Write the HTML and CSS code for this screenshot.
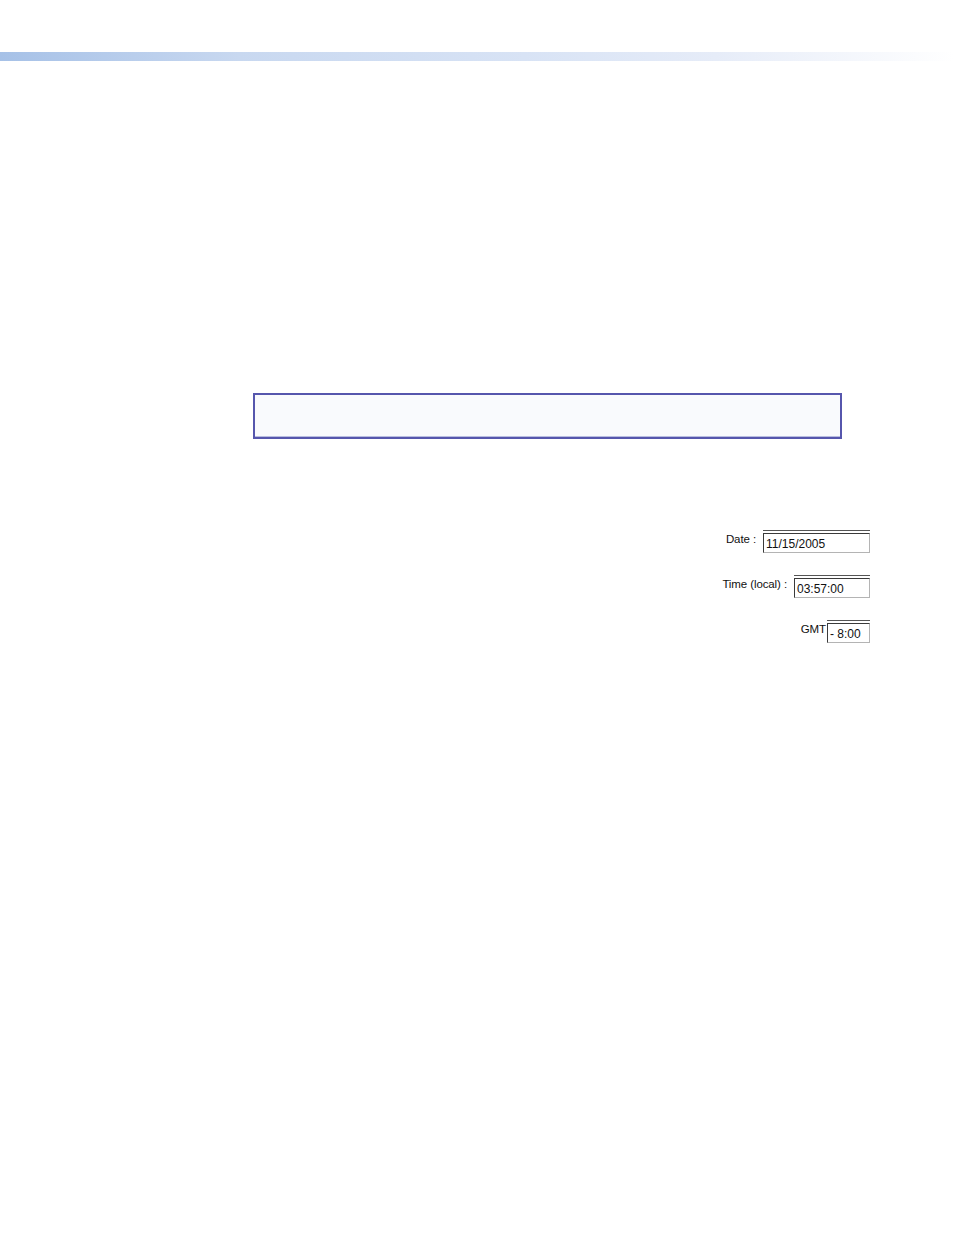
FILE: index.html
```html
<!DOCTYPE html>
<html>
<head>
<meta charset="utf-8">
<link rel="stylesheet" href="styles.css">
</head>
<body>
<div class="topbar"></div>
<div class="note"></div>
<div class="fields">
  <div class="row row-date">
    <span class="label">Date :</span>
    <div class="field w-date"><div class="field-inner">11/15/2005</div></div>
  </div>
  <div class="row row-time">
    <span class="label">Time (local) :</span>
    <div class="field w-time"><div class="field-inner">03:57:00</div></div>
  </div>
  <div class="row row-gmt">
    <span class="label">GMT</span>
    <div class="field w-gmt"><div class="field-inner">- 8:00</div></div>
  </div>
</div>
</body>
</html>
```
FILE: styles.css
```css
html, body {
  margin: 0;
  padding: 0;
  background: #ffffff;
  font-family: "Liberation Sans", Arial, sans-serif;
}
.topbar {
  margin-top: 52px;
  height: 9px;
  background: linear-gradient(to right, #a6c1e7 0%, #c8d8f0 25%, #d8e3f5 55%, #e6ecf8 75%, #ffffff 100%);
}
.note {
  box-sizing: border-box;
  margin: 332px 0 0 253px;
  width: 589px;
  height: 46px;
  border: 2px solid #5656ad;
  background: #f9fafd;
  box-shadow: inset 0 -2px 0 -1px #b9bde0;
}
.fields {
  margin-top: 91px;
  padding-right: 84px;
  display: flex;
  flex-direction: column;
  align-items: flex-end;
}
.row {
  display: flex;
  align-items: flex-start;
}
.row-time { margin-top: 22px; }
.row-gmt { margin-top: 22px; }
.label {
  font-size: 11.5px;
  color: #111;
  padding-top: 3px;
  letter-spacing: -0.1px;
}
.row-date .label { margin-right: 7px; }
.row-time .label { margin-right: 7px; }
.row-gmt .label { margin-right: 1px; }
.field {
  border-top: 1px solid #555;
  padding-top: 2px;
  background: #fff;
}
.field-inner {
  box-sizing: border-box;
  height: 20px;
  border: 1px solid #b4b4b4;
  border-top-color: #3a3a3a;
  border-left-color: #3a3a3a;
  font-size: 12px;
  line-height: 18px;
  padding: 1px 0 0 2px;
  color: #111;
}
.w-date { width: 107px; }
.w-time { width: 76px; }
.w-gmt { width: 43px; }
```
